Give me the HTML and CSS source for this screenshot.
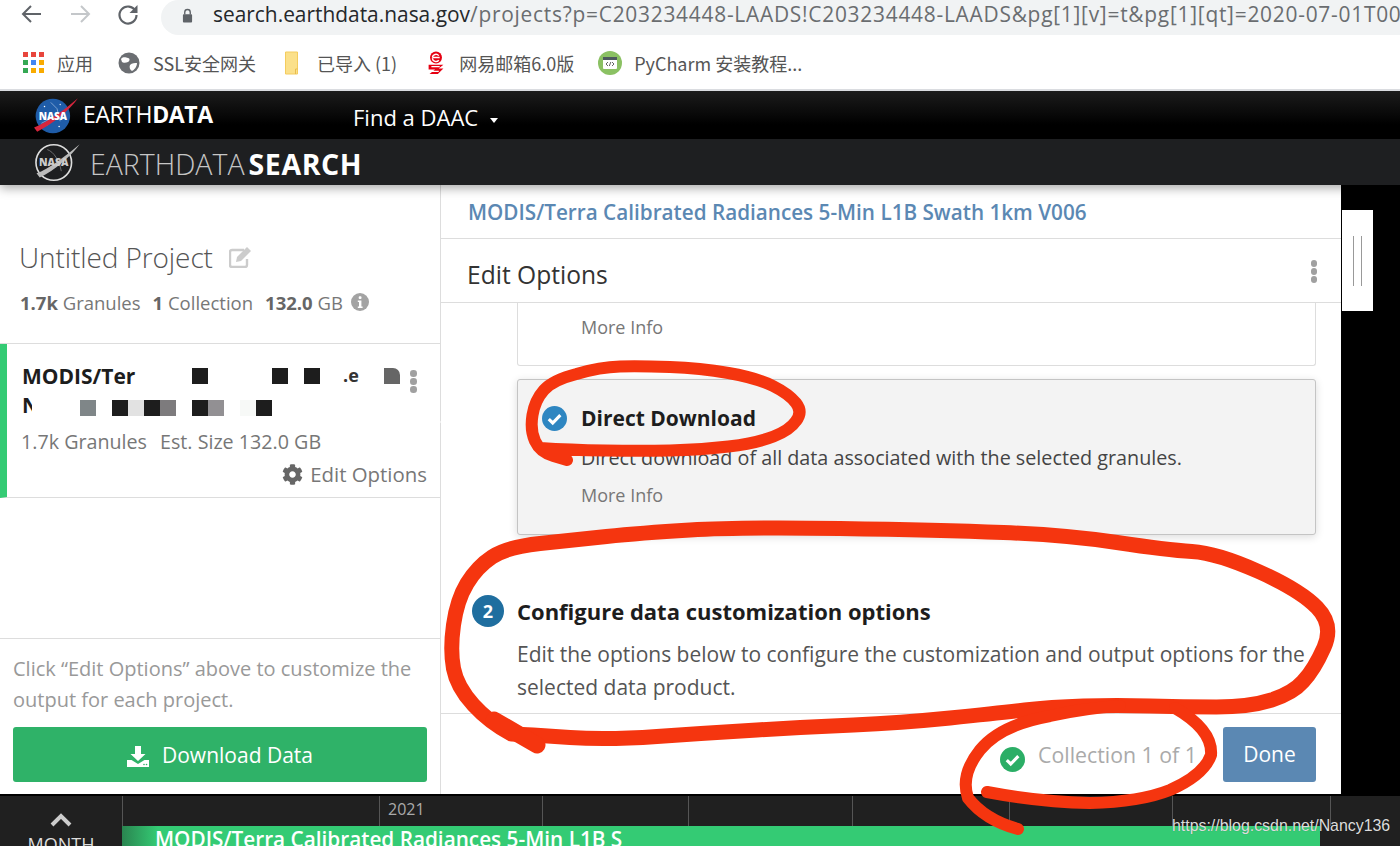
FILE: index.html
```html
<!DOCTYPE html>
<html lang="en">
<head>
<meta charset="utf-8">
<title>Earthdata Search</title>
<link rel="stylesheet" href="styles.css">
</head>
<body>
<div class="page">
  <div class="chrome">
    <div class="toolbar">
      <svg class="nav" viewBox="0 0 24 24"><path d="M21 12H4M11 4l-8 8 8 8" fill="none" stroke="#5f6368" stroke-width="2"/></svg>
      <svg class="nav" viewBox="0 0 24 24"><path d="M3 12h17M13 4l8 8-8 8" fill="none" stroke="#c4c7ca" stroke-width="2"/></svg>
      <svg class="nav" viewBox="0 0 24 24"><path d="M19.5 9A8.5 8.5 0 1 0 20.5 13" fill="none" stroke="#5f6368" stroke-width="2.2"/><path d="M21.5 3v8h-8z" fill="#5f6368"/></svg>
      <div class="omnibox">
        <svg class="lock" viewBox="0 0 12 16"><path d="M3 7V4.5a3 3 0 0 1 6 0V7" fill="none" stroke="#5f6368" stroke-width="1.5"/><rect x="1" y="6.5" width="10" height="9" rx="1" fill="#5f6368"/></svg>
        <span class="url"><span class="host">search.earthdata.nasa.gov</span>/projects?p=C203234448-LAADS!C203234448-LAADS&amp;pg[1][v]=t&amp;pg[1][qt]=2020-07-01T00</span>
      </div>
    </div>
    <div class="bookmarks">
      <div class="bm bm-apps">
        <span class="apps"><i class="r"></i><i class="r"></i><i class="r"></i><i class="g"></i><i class="b"></i><i class="y"></i><i class="g"></i><i class="y"></i><i class="y"></i></span>
        <span>应用</span>
      </div>
      <div class="bm bm-ssl">
        <svg class="bm-icon" viewBox="0 0 22 22"><circle cx="11" cy="11" r="10.5" fill="#6b6e72"/><path d="M3 7c3-3 5-1 7-1s2 3 0 4-5 1-6 0zM12 13c2-2 5-2 7-2 0 4-3 7-5 8-2-1-3-4-2-6z" fill="#fff"/></svg>
        <span>SSL安全网关</span>
      </div>
      <div class="bm bm-folder">
        <svg class="bm-folder-icon" viewBox="0 0 14 24"><path d="M1 1h12v22H1z" fill="#fbe08a" stroke="#f4cc5e"/><path d="M11 23v-5h2" fill="none" stroke="#e8bd4e"/></svg>
        <span>已导入 (1)</span>
      </div>
      <div class="bm bm-mail">
        <svg class="bm-icon" viewBox="0 0 20 26"><circle cx="10" cy="7" r="6.5" fill="#e60012"/><path d="M6 7h8M6 7a4 4 0 0 1 7-2M6 8a4 4 0 0 0 7 2" stroke="#fff" stroke-width="1.5" fill="none"/><path d="M2 15h16l-5 4h5l-6 6H3l6-5H2z" fill="#e60012"/><path d="M5 17h9M5 22h8" stroke="#fff" stroke-width="1.3"/></svg>
        <span>网易邮箱6.0版</span>
      </div>
      <div class="bm bm-py">
        <svg class="bm-icon" viewBox="0 0 24 24"><circle cx="12" cy="12" r="12" fill="#8bc163"/><rect x="5" y="6" width="14" height="12" rx="1" fill="#fff"/><rect x="5" y="6" width="14" height="3" fill="#4d5a5e"/><path d="M10 11l-2 2 2 2M14 11l2 2-2 2M12.8 11l-1.5 4" fill="none" stroke="#555" stroke-width=".9"/></svg>
        <span>PyCharm 安装教程...</span>
      </div>
    </div>
  </div>

  <header class="earthdata-bar">
    <div class="ed-brand">
      <svg class="meatball" viewBox="0 0 44 38">
        <circle cx="19" cy="19" r="16.5" fill="#1f5ca8"/>
        <circle cx="11" cy="10" r=".7" fill="#fff"/><circle cx="26" cy="8" r=".6" fill="#fff"/><circle cx="13" cy="28" r=".6" fill="#fff"/><circle cx="25" cy="29" r=".7" fill="#fff"/>
        <path d="M17 6l6 6 3 12M8 26l8-4" fill="none" stroke="#cfe0f5" stroke-width=".5"/>
        <path d="M1 30C14 25 30 13 43 2 35 13 20 26 4 34z" fill="#d7263d"/>
        <text x="19" y="22.500" class="meatball-text">NASA</text>
      </svg>
      <span class="ed-word">EARTH<b>DATA</b></span>
    </div>
    <div class="ed-daac">Find a DAAC <span class="caret"></span></div>
  </header>
  <div class="search-bar">
    <svg class="meatball meatball-grey" viewBox="0 0 44 38">
      <circle cx="19" cy="19" r="16.5" fill="#1e1f21" stroke="#ddd" stroke-width="1.5"/>
      <path d="M13 7c6 2 11 10 13 20M8 28c5-2 10-6 13-8" fill="none" stroke="#888" stroke-width=".7"/>
      <path d="M3 29C14 25 30 13 43 2 35 13 20 26 6 33z" fill="#bbb"/>
      <text x="19" y="22.500" class="meatball-text meatball-text-grey">NASA</text>
    </svg>
    <span class="search-word">EARTHDATA<b>SEARCH</b></span>
  </div>

  <main class="main">
    <aside class="side">
      <div class="proj-head">
        <div class="proj-title">Untitled Project
          <svg class="edit-icon" viewBox="0 0 24 22"><path d="M15 4H3a2 2 0 0 0-2 2v13a2 2 0 0 0 2 2h13a2 2 0 0 0 2-2v-6" fill="none" stroke="#ccc" stroke-width="2.4"/><path d="M8 11L18 1l4 4-10 10-5 1z" fill="#ccc"/></svg>
        </div>
        <div class="proj-stats">
          <span><b>1.7k</b> Granules</span><span><b>1</b> Collection</span><span><b>132.0</b> GB</span>
          <svg class="info-icon" viewBox="0 0 18 18"><circle cx="9" cy="9" r="9" fill="#a3a3a3"/><rect x="7.7" y="3.2" width="2.8" height="2.8" rx="1" fill="#fff"/><path d="M6.8 7.5h3.6v6h1.2v1.4H6.8v-1.4H8V9H6.8z" fill="#fff"/></svg>
        </div>
      </div>
      <div class="proj-card">
        <div class="pc-title">MODIS/Ter</div>
        <div class="pc-title pc-title-2">N</div>
        <div class="pc-meta"><span>1.7k Granules</span><span>Est. Size 132.0 GB</span></div>
        <div class="pc-edit">
          <svg class="gear" viewBox="0 0 512 512"><path fill="#666" d="M487.4 315.7l-42.6-24.6c4.3-23.2 4.3-47 0-70.2l42.6-24.6c4.9-2.8 7.1-8.6 5.5-14-11.1-35.6-30-67.8-54.7-94.6-3.8-4.1-10-5.1-14.8-2.3L380.8 110c-17.9-15.4-38.5-27.3-60.8-35.1V25.8c0-5.6-3.9-10.5-9.4-11.7-36.7-8.2-74.3-7.8-109.2 0-5.5 1.2-9.4 6.1-9.4 11.7V75c-22.2 7.9-42.8 19.8-60.8 35.1L88.7 85.5c-4.9-2.8-11-1.9-14.8 2.3-24.7 26.7-43.6 58.9-54.7 94.6-1.7 5.4.6 11.2 5.5 14L67.3 221c-4.3 23.2-4.3 47 0 70.2l-42.6 24.6c-4.9 2.8-7.1 8.6-5.5 14 11.1 35.6 30 67.8 54.7 94.6 3.8 4.1 10 5.1 14.8 2.3l42.6-24.6c17.9 15.4 38.5 27.3 60.8 35.1v49.2c0 5.6 3.9 10.5 9.4 11.7 36.7 8.2 74.3 7.8 109.2 0 5.5-1.2 9.4-6.1 9.4-11.7v-49.2c22.2-7.9 42.8-19.8 60.8-35.1l42.6 24.6c4.9 2.8 11 1.9 14.8-2.3 24.7-26.7 43.6-58.9 54.7-94.6 1.5-5.5-.7-11.3-5.6-14.1zM256 336c-44.1 0-80-35.9-80-80s35.9-80 80-80 80 35.9 80 80-35.9 80-80 80z"/></svg>
          <span>Edit Options</span>
        </div>
        <div class="dots dots-card"><i></i><i></i><i></i></div>
        <div class="mosaic">
          <i class="m c13"></i><i class="m c18"></i><i class="m c20"></i><i class="m c25 grey"></i>
          <i class="m c6 r3 mid"></i><i class="m c8 r3"></i><i class="m c9 r3 pale"></i><i class="m c10 r3"></i><i class="m c11 r3 soft"></i><i class="m c13 r3"></i><i class="m c14 r3 soft2"></i><i class="m c16 r3 faint"></i><i class="m c17 r3"></i>
        </div>
        <span class="frag">.e</span>
        <span class="pointer"></span>
      </div>
      <div class="side-spacer"></div>
      <div class="side-foot">
        <p class="side-hint">Click “Edit Options” above to customize the output for each project.</p>
        <div class="dl-btn">
          <svg class="dl-icon" viewBox="0 0 22 21"><path d="M8 0h6v8h4.500l-7.500 7-7.500-7H8z" fill="#fff"/><path d="M0 14h4.500l6.500 4 6.500-4H22v7H0z" fill="#fff"/><circle cx="17" cy="18.500" r=".8" fill="#2fb268"/><circle cx="19.500" cy="18.500" r=".8" fill="#2fb268"/></svg>
          <span>Download Data</span>
        </div>
      </div>
    </aside>

    <section class="center">
      <div class="c-title">MODIS/Terra Calibrated Radiances 5-Min L1B Swath 1km V006</div>
      <div class="c-head">
        <span>Edit Options</span>
        <div class="dots dots-head"><i></i><i></i><i></i></div>
      </div>
      <div class="c-body">
        <div class="opt opt-plain"><span class="more">More Info</span></div>
        <div class="opt opt-sel">
          <div class="opt-title">
            <svg class="check-blue" viewBox="0 0 24 24"><circle cx="12" cy="12" r="12" fill="#2e86c1"/><path d="M6.500 12.500l3.800 3.800 7.300-7.600" fill="none" stroke="#fff" stroke-width="3"/></svg>
            <b>Direct Download</b>
          </div>
          <div class="opt-desc">Direct download of all data associated with the selected granules.</div>
          <span class="more">More Info</span>
        </div>
        <div class="step">
          <div class="step-head"><span class="step-num">2</span><b>Configure data customization options</b></div>
          <p class="step-text">Edit the options below to configure the customization and output options for the selected data product.</p>
        </div>
      </div>
      <div class="c-foot">
        <svg class="check-green" viewBox="0 0 24 24"><circle cx="12" cy="12" r="12" fill="#2bae66"/><path d="M6.500 12.500l3.800 3.800 7.300-7.600" fill="none" stroke="#fff" stroke-width="3"/></svg>
        <span class="coll">Collection 1 of 1</span>
        <span class="done">Done</span>
      </div>
    </section>

    <div class="handle"><i></i><i></i></div>
  </main>

  <footer class="timeline">
    <div class="tl-zoom">
      <svg class="tl-chev" viewBox="0 0 22 14"><path d="M2 12l9-9 9 9" fill="none" stroke="#ccc" stroke-width="4"/></svg>
      <span>MONTH</span>
    </div>
    <div class="tl-main">
      <div class="tl-ticks">
        <span class="tk t1"></span><span class="tk t2"><em>2021</em></span><span class="tk t3"></span><span class="tk t4"></span><span class="tk t5"></span><span class="tk t6"></span><span class="tk t7"></span><span class="tk t8"></span>
      </div>
      <div class="tl-bar"><span>MODIS/Terra Calibrated Radiances 5-Min L1B S</span></div>
    </div>
  </footer>

  <div class="watermark">https://blog.csdn.net/Nancy136</div>

  <svg class="ink" viewBox="0 0 1400 846">
    <path class="s12" d="M567 460L553.500 456Q540 452 535 441Q530 430 532.500 415Q535 400 544 390Q553 380 576.500 374Q600 367 620 366.500Q640 366 670 367Q700 368 728.500 373Q757 378 773 386Q789 394 796 403Q803 412 796 421Q790 430 773.500 436.500Q757 443 728.500 446.500Q700 450 670 450.500Q640 451 605 450.500Q570 450 540 448"/>
    <path class="s15" d="M533 735L511.500 734Q490 723 473.500 705Q457 687 453.500 668.500Q450 650 453.500 625Q457 600 467 583.500Q477 567 492 557Q507 547 540 543.500Q573 540 606.500 536.500Q640 533 690 530Q740 527 840 528.500Q940 530 1003.500 532.500Q1067 535 1117 542.500Q1167 550 1192 551.500Q1217 553 1258.500 571.500Q1300 590 1317 607.500Q1334 625 1324 647.500Q1314 670 1303 681.500Q1293 693 1271.500 700Q1250 707 1216.500 707Q1183 707 1150 706Q1117 705 1083.500 706Q1050 707 1025 710Q1000 713 950 718Q900 723 853.500 725Q807 727 757 730Q707 733 657 736.500Q607 740 570 737.500L533 735"/>
    <path class="s18" d="M494 720L537 745"/>
    <path class="s12" d="M1175 708Q1213 730 1211 755Q1204 775 1170 790Q1140 802 1090 803Q1040 802 987 792"/>
    <path class="s12" d="M1120 706Q1085 708 1050 716Q1000 725 980 750Q960 775 968 798Q985 820 1018 829"/>
  </svg>
</div>
</body>
</html>
```
FILE: styles.css
```css
* { box-sizing: border-box; }
html, body { margin: 0; padding: 0; }
body { font-family: "Open Sans", "Noto Sans CJK SC", sans-serif; background: #000; }
p { margin: 0; }
.page { position: relative; width: 1400px; height: 846px; overflow: hidden; display: flex; flex-direction: column; background: #000; }

/* browser chrome */
.chrome { height: 91px; flex: none; background: #fff; border-bottom: 2px solid #dadce0; }
.toolbar { height: 44px; display: flex; align-items: flex-start; }
.nav { width: 24px; height: 24px; margin-top: 2px; flex: none; }
.nav:nth-child(1) { margin-left: 20px; }
.nav:nth-child(2) { margin-left: 24px; }
.nav:nth-child(3) { margin-left: 24px; }
.omnibox { margin-left: 21px; flex: 1; height: 35px; background: #f1f3f4; border-radius: 18px 0 0 18px; display: flex; align-items: center; overflow: hidden; padding-left: 21px; white-space: nowrap; }
.lock { width: 11px; height: 15px; flex: none; margin-top: -4px; }
.url { margin-left: 20px; font-size: 20.900px; color: #6a6d70; margin-top: -8px; letter-spacing: .75px; }
.host { color: #25282b; letter-spacing: 0; }
.bookmarks { height: 45px; display: flex; align-items: center; font-size: 18px; color: #555; white-space: nowrap; padding-bottom: 8px; font-family: "Noto Sans CJK SC", "Open Sans", sans-serif; }
.bm { display: flex; align-items: center; }
.bm-apps { margin-left: 23px; }
.apps { display: grid; grid-template-columns: repeat(3, 5px); gap: 3px; margin-right: 13px; }
.apps i { width: 5px; height: 5px; display: block; }
.apps .r { background: #e8453c; }
.apps .g { background: #34a853; }
.apps .b { background: #4285f4; }
.apps .y { background: #f9ab00; }
.bm-ssl { margin-left: 25px; }
.bm-icon { width: 22px; height: 24px; margin-right: 13px; }
.bm-folder { margin-left: 28px; }
.bm-folder-icon { width: 15px; height: 24px; margin-right: 18px; }
.bm-mail { margin-left: 28px; }
.bm-mail .bm-icon { margin-right: 12px; }
.bm-py { margin-left: 24px; }
.bm-py .bm-icon { width: 24px; margin-right: 12px; }

/* earthdata bars */
.earthdata-bar { height: 48px; flex: none; background: linear-gradient(#1c1c1c, #000 70%); display: flex; align-items: center; color: #fff; }
.ed-brand { display: flex; align-items: center; margin-left: 33px; width: 320px; }
.meatball { width: 46px; height: 40px; flex: none; margin-top: 2px; }
.meatball-text { font: 800 9.500px "Open Sans", sans-serif; fill: #fff; text-anchor: middle; }
.meatball-text-grey { fill: #ccc; }
.ed-word { font-size: 23px; margin-left: 4px; letter-spacing: -.4px; margin-top: -3px; }
.ed-daac { font-size: 22px; margin-top: 4px; }
.caret { display: inline-block; margin-left: 6px; vertical-align: 3px; border: 4px solid transparent; border-top: 5px solid #fff; border-bottom: 0; }
.search-bar { position: relative; z-index: 2; height: 46px; flex: none; background: #1e1f21; display: flex; align-items: center; box-shadow: 0 3px 10px rgba(0,0,0,.35); padding-left: 33px; }
.meatball-grey { width: 48px; height: 41px; margin-top: 0; }
.search-word { font-size: 28.500px; font-weight: 300; color: #c6c6c6; margin-left: 9px; margin-top: 3px; white-space: nowrap; }
.search-word b { font-weight: 700; color: #fff; margin-left: 4px; letter-spacing: .6px; }

/* main layout */
.main { flex: none; height: 609px; display: flex; align-items: flex-start; }
.side { width: 441px; height: 609px; flex: none; background: #fff; border-right: 1px solid #ddd; display: flex; flex-direction: column; }
.proj-head { height: 159px; flex: none; padding: 52px 19px 0; border-bottom: 1px solid #ddd; }
.proj-title { font-size: 28px; font-weight: 300; color: #555; line-height: 40px; display: flex; align-items: center; letter-spacing: -.1px; }
.edit-icon { width: 24px; height: 22px; margin-left: 16px; }
.proj-stats { margin-top: 14px; display: flex; align-items: center; font-size: 18.500px; color: #777; line-height: 24px; padding-left: 1px; }
.proj-stats span { margin-right: 12px; }
.proj-stats span:nth-child(3) { margin-right: 8px; }
.proj-stats b { color: #666; }
.info-icon { width: 18px; height: 18px; margin-top: -2px; }
.proj-card { position: relative; height: 154px; flex: none; border-left: 7px solid #34cb74; border-bottom: 1px solid #ddd; padding: 18px 13px 0 15px; }
.pc-title { font-size: 21px; font-weight: 700; color: #1d1d1d; line-height: 29px; height: 29px; }
.pc-title-2 { width: 10px; overflow: hidden; margin-top: 0; }
.pc-meta { margin-top: 9px; font-size: 19.700px; color: #777; line-height: 26px; display: flex; gap: 13px; margin-left: -1px; }
.pc-edit { margin-top: 4px; display: flex; justify-content: flex-end; align-items: center; font-size: 20.400px; color: #777; line-height: 30px; }
.gear { width: 21px; height: 21px; margin-right: 7px; }
.dots { display: flex; flex-direction: column; gap: 1.500px; }
.dots i { display: block; width: 6.500px; height: 6.500px; border-radius: 50%; background: #a0a0a0; }
.dots-card { position: absolute; left: 403px; top: 26px; }
.dots-head { margin-top: -6px; }
.mosaic { position: absolute; left: -7px; top: 24px; display: grid; grid-template-columns: repeat(25, 16px); grid-auto-rows: 16px; }
.m { display: block; background: #1d1d1d; grid-row: 1; }
.r3 { grid-row: 3; }
.grey { background: #666; border-top-right-radius: 7px; }
.mid { background: #7f8688; }
.pale { background: #e2e2e2; }
.soft { background: #7d7b7d; }
.soft2 { background: #929093; }
.faint { background: #f7f9f7; }
.c6 { grid-column: 6; } .c8 { grid-column: 8; } .c9 { grid-column: 9; } .c10 { grid-column: 10; } .c11 { grid-column: 11; }
.c13 { grid-column: 13; } .c14 { grid-column: 14; } .c16 { grid-column: 16; } .c17 { grid-column: 17; } .c18 { grid-column: 18; } .c20 { grid-column: 20; } .c25 { grid-column: 25; }
.frag { position: absolute; left: 336px; top: 21px; font-size: 18px; font-weight: 700; color: #333; line-height: 20px; }
.pointer { position: absolute; right: -15px; top: 63px; width: 15px; height: 30px; background: #fff; clip-path: polygon(100% 0, 100% 100%, 0 50%); }
.side-spacer { flex: 1; }
.side-foot { height: 156px; flex: none; border-top: 1px solid #ddd; padding: 14px 13px 0; }
.side-hint { font-size: 20px; color: #999; line-height: 31px; }
.dl-btn { margin-top: 12px; height: 55px; background: #2fb268; border-radius: 3px; color: #fff; display: flex; align-items: center; justify-content: center; font-size: 21px; }
.dl-icon { width: 22px; height: 21px; margin-right: 13px; margin-top: 3px; }

.center { width: 900px; height: 609px; flex: none; background: #fff; display: flex; flex-direction: column; }
.c-title { height: 54px; flex: none; border-bottom: 1px solid #ddd; padding: 11px 0 0 27px; font-size: 20.700px; font-weight: 600; color: #5b88b3; line-height: 32px; white-space: nowrap; }
.c-head { height: 64px; flex: none; border-bottom: 1px solid #ddd; display: flex; align-items: center; justify-content: space-between; padding: 8px 24px 0 26px; font-size: 24.600px; font-weight: 500; color: #333; line-height: 54px; }
.c-body { height: 410px; flex: none; overflow: hidden; padding: 0 25px 0 76px; }
.opt { display: block; border: 1px solid #ddd; border-radius: 3px; padding-left: 63px; }
.opt-plain { height: 63px; border-top: 0; border-radius: 0 0 3px 3px; padding-top: 9px; }
.more { display: block; font-size: 18px; color: #777; line-height: 30px; }
.opt-sel { height: 156px; margin-top: 13px; background: #f3f3f3; border-color: #c4c4c4; box-shadow: 0 2px 8px rgba(0,0,0,.14); position: relative; padding-top: 21px; }
.opt-title { font-size: 21px; color: #1d1d1d; line-height: 34px; display: flex; align-items: center; }
.check-blue { width: 25px; height: 25px; margin-left: -39px; margin-right: 14px; }
.opt-desc { font-size: 19.750px; color: #444; line-height: 30px; margin-top: 8px; }
.opt-sel .more { margin-top: 7px; }
.step { margin-top: 60px; }
.step-head { display: flex; align-items: center; font-size: 22px; color: #1d1d1d; line-height: 32px; margin-left: -45px; }
.step-num { width: 32px; height: 32px; border-radius: 50%; background: #1f6e9f; color: #fff; font-size: 18px; font-weight: 700; display: flex; align-items: center; justify-content: center; margin-right: 13px; flex: none; }
.step-text { font-size: 21px; color: #555; line-height: 33px; margin-top: 11px; }
.c-foot { flex: 1; border-top: 1px solid #ddd; display: flex; align-items: flex-start; padding: 13px 25px 0 0; justify-content: flex-end; }
.check-green { width: 25px; height: 25px; margin-top: 20px; margin-right: 13px; }
.coll { font-size: 21.300px; color: #aaa; line-height: 55px; margin-right: 26px; }
.done { width: 93px; height: 55px; background: #5b88b3; border-radius: 3px; color: #fff; font-size: 21px; display: flex; align-items: center; justify-content: center; padding-bottom: 2px; }

.handle { margin-top: 25px; width: 31px; height: 101px; flex: none; background: #fff; margin-left: 1px; display: flex; gap: 7px; padding: 26px 0 0 11px; }
.handle i { display: block; width: 1px; height: 50px; background: #999; }

/* timeline */
.timeline { flex: none; height: 52px; background: #202020; border-top: 2px solid #000; display: flex; font-family: "Open Sans", sans-serif; }
.tl-zoom { width: 122px; flex: none; text-align: center; color: #ddd; font-size: 18px; padding-top: 17px; line-height: 22px; }
.tl-chev { display: block; width: 22px; height: 14px; margin: 0 auto 6px; }
.tl-main { flex: 1; display: flex; flex-direction: column; }
.tl-ticks { height: 30px; flex: none; display: flex; }
.tk { display: block; height: 30px; border-left: 1px solid #555; flex: none; }
.tk em { font-style: normal; font-size: 16px; color: #aaa; margin-left: 8px; line-height: 27px; display: block; }
.t1 { width: 93px; }
.t2 { margin-left: 164px; width: 163px; }
.t3 { width: 146px; } .t4 { width: 164px; } .t5 { width: 157px; } .t6 { width: 163px; } .t7 { width: 158px; } .t8 { width: 40px; }
.tl-bar { height: 20px; width: 1198px; background: linear-gradient(90deg, #2a8550, #34cb74 3%); color: #fff; font-size: 20.750px; font-weight: 600; line-height: 27px; padding-left: 33px; white-space: nowrap; overflow: hidden; }

.watermark { position: absolute; left: 1172px; top: 816px; font: 15.900px/20px "Liberation Sans", sans-serif; color: #ddd; text-shadow: 0 0 1px rgba(0,0,0,.3); white-space: nowrap; }

/* hand-drawn annotation over the whole screenshot */
.ink { position: absolute; left: 0; top: 0; width: 1400px; height: 846px; pointer-events: none; }
.ink path { fill: none; stroke: #f5350f; stroke-linecap: round; stroke-linejoin: round; }
.ink .s12 { stroke-width: 12; }
.ink .s15 { stroke-width: 15; }
.ink .s18 { stroke-width: 17; }
```
